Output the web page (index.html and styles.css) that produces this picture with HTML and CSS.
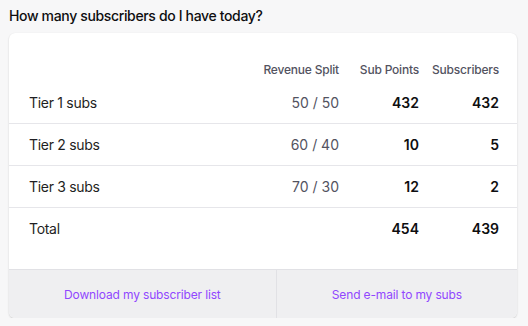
FILE: index.html
```html
<!DOCTYPE html>
<html>
<head>
<meta charset="utf-8">
<link rel="stylesheet" href="styles.css">
</head>
<body>
<h1 class="title">How many subscribers do I have today?</h1>
<div class="card">
  <div class="table">
    <div class="row head">
      <span></span>
      <span class="num">Revenue Split</span>
      <span class="num">Sub Points</span>
      <span class="num">Subscribers</span>
    </div>
    <div class="row line">
      <span class="label">Tier 1 subs</span>
      <span class="num split">50 / 50</span>
      <span class="num strong">432</span>
      <span class="num strong">432</span>
    </div>
    <div class="row line">
      <span class="label">Tier 2 subs</span>
      <span class="num split">60 / 40</span>
      <span class="num strong">10</span>
      <span class="num strong">5</span>
    </div>
    <div class="row line">
      <span class="label">Tier 3 subs</span>
      <span class="num split">70 / 30</span>
      <span class="num strong">12</span>
      <span class="num strong">2</span>
    </div>
    <div class="row line total">
      <span class="label">Total</span>
      <span class="num split"></span>
      <span class="num strong">454</span>
      <span class="num strong">439</span>
    </div>
  </div>
  <div class="footer">
    <a class="action">Download my subscriber list</a>
    <a class="action">Send e-mail to my subs</a>
  </div>
</div>
</body>
</html>
```
FILE: styles.css
```css
html, body {
  margin: 0;
  padding: 0;
  background: #f7f7f8;
  font-family: Inter, "Noto Sans", sans-serif;
  color: #0e0e10;
}
body {
  padding: 7px 9px 0 9px;
  width: 508px;
}
.title {
  margin: 0;
  font-size: 14px;
  font-weight: 500;
  line-height: 18px;
  letter-spacing: -0.35px;
  color: #0e0e10;
}
.card {
  margin-top: 8px;
  background: #fff;
  border-radius: 6px;
  box-shadow: 0 1px 2px rgba(0,0,0,0.16), 0 0 1px rgba(0,0,0,0.06);
  overflow: hidden;
}
.table {
  padding: 20px 0 20px 0;
}
.row {
  display: grid;
  grid-template-columns: 1fr 80px 80px 80px;
  align-items: center;
  padding: 0 18px 0 20px;
}
.head {
  height: 28px;
  align-items: end;
  font-size: 12px;
  font-weight: 500;
  color: #53535f;
  letter-spacing: -0.2px;
  line-height: 20px;
}
.head span { padding-bottom: 1px; }
.line {
  height: 42px;
  font-size: 14px;
}
.line + .line {
  border-top: 1px solid #e6e6ea;
  height: 41px;
}
.label {
  color: #1f1f23;
  font-weight: 400;
  letter-spacing: -0.3px;
}
.num {
  text-align: right;
}
.split {
  color: #53535f;
  font-weight: 400;
}
.strong {
  font-weight: 600;
  color: #0e0e10;
}
.footer {
  display: flex;
  height: 48px;
  background: #efeff1;
  border-top: 1px solid #e1e1e5;
}
.action {
  flex: 1 1 auto;
  display: flex;
  align-items: center;
  justify-content: center;
  color: #9147ff;
  font-size: 12px;
  letter-spacing: -0.15px;
}
.action + .action {
  border-left: 1px solid #e1e1e5;
}
```
